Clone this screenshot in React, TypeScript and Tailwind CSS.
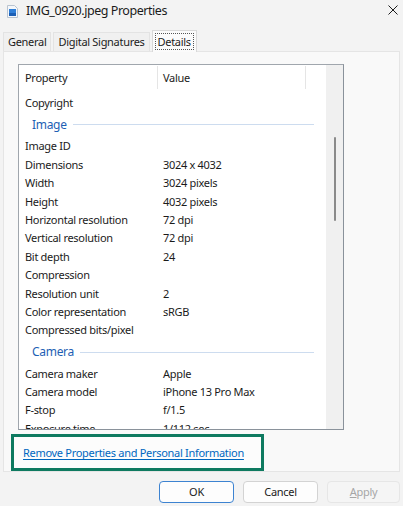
import React from 'react';

type Row =
  | { kind: 'row'; name: string; value?: string }
  | { kind: 'group'; name: string };

const rows: Row[] = [
  { kind: 'row', name: 'Copyright' },
  { kind: 'group', name: 'Image' },
  { kind: 'row', name: 'Image ID' },
  { kind: 'row', name: 'Dimensions', value: '3024 x 4032' },
  { kind: 'row', name: 'Width', value: '3024 pixels' },
  { kind: 'row', name: 'Height', value: '4032 pixels' },
  { kind: 'row', name: 'Horizontal resolution', value: '72 dpi' },
  { kind: 'row', name: 'Vertical resolution', value: '72 dpi' },
  { kind: 'row', name: 'Bit depth', value: '24' },
  { kind: 'row', name: 'Compression' },
  { kind: 'row', name: 'Resolution unit', value: '2' },
  { kind: 'row', name: 'Color representation', value: 'sRGB' },
  { kind: 'row', name: 'Compressed bits/pixel' },
  { kind: 'group', name: 'Camera' },
  { kind: 'row', name: 'Camera maker', value: 'Apple' },
  { kind: 'row', name: 'Camera model', value: 'iPhone 13 Pro Max' },
  { kind: 'row', name: 'F-stop', value: 'f/1.5' },
  { kind: 'row', name: 'Exposure time', value: '1/112 sec.' },
];

function FileIcon() {
  return (
    <svg width="11" height="13" viewBox="0 0 11 13">
      <path d="M0.5 0.5h7l3 3v9h-10z" fill="#f4f7fb" stroke="#b9c3cf" />
      <rect x="2" y="4" width="7" height="7" fill="#2f7fd8" />
      <rect x="2" y="8" width="7" height="3" fill="#1c5fb5" />
    </svg>
  );
}

function Tab({ label, active }: { label: string; active?: boolean }) {
  if (active) {
    return (
      <div className="relative z-10 -mb-px h-[22px] px-[2px] pt-[2px] bg-[#fbfbfb] border border-b-0 border-[#d9d9d9]">
        <div className="px-[2px] h-[17px] leading-[15px] border border-dotted border-[#555]">
          {label}
        </div>
      </div>
    );
  }
  return (
    <div className="h-[19px] mt-[2px] px-[4px] leading-[18px] bg-[#f0f0f0] border border-b-0 border-[#e3e3e3]">
      {label}
    </div>
  );
}

export default function App() {
  return (
    <div className="w-[403px] h-[506px] overflow-hidden bg-[#f3f3f3] text-[11px] tracking-[-0.3px] text-[#1b1b1b] font-['Noto_Sans',sans-serif]">
      {/* title bar */}
      <div className="h-[30px] flex items-start pt-[4px]">
        <div className="ml-[7px] mt-[1px]">
          <FileIcon />
        </div>
        <div className="ml-[8px] text-[12.5px] tracking-[-0.45px] leading-[14px]">IMG_0920.jpeg Properties</div>
        <div className="ml-auto mr-[5px] mt-[1px] w-[10px] h-[10px]">
          <svg width="10" height="10" viewBox="0 0 10 10">
            <path d="M0.5 0.5l9 9M9.5 0.5l-9 9" stroke="#1b1b1b" strokeWidth="1" />
          </svg>
        </div>
      </div>

      {/* tabs */}
      <div className="flex items-end pl-[3px] gap-[2px] h-[21px]">
        <Tab label="General" />
        <Tab label="Digital Signatures" />
        <Tab label="Details" active />
      </div>

      {/* tab page */}
      <div className="mx-[3px] h-[421px] bg-[#f9f9f9] border border-[#e5e5e5] pt-[12px] pl-[14px]">
        <div className="w-[326px] h-[366px] bg-white border border-[#a0a6ad] border-r-[#8a929b] border-b-[#8a929b] flex overflow-hidden">
          <div className="flex-1 overflow-hidden">
            <div className="h-[25px] flex relative">
              <div className="w-[138px] pl-[6px] leading-[25px]">Property</div>
              <div className="w-px h-[23px] bg-[#e5e5e5] mt-[1px]" />
              <div className="w-[147px] pl-[5px] leading-[25px]">Value</div>
              <div className="w-px h-[23px] bg-[#e5e5e5] mt-[1px]" />
            </div>
            <div className="pt-[4px]">
              {rows.map((r, i) =>
                r.kind === 'group' ? (
                  <div key={i} className="h-[25px] flex items-center pl-[13px] pr-[12px]">
                    <span className="text-[#1e5fb4] text-[12px]">{r.name}</span>
                    <div className="ml-[6px] h-px flex-1 bg-[#cddcef]" />
                  </div>
                ) : (
                  <div key={i} className="h-[18.4px] flex leading-[18.4px] whitespace-nowrap">
                    <div className="w-[144px] pl-[6px]">{r.name}</div>
                    <div>{r.value ?? ''}</div>
                  </div>
                )
              )}
            </div>
          </div>
          <div className="w-[17px] bg-[#f0f0f0] flex justify-center">
            <div className="mt-[72px] w-[2px] h-[84px] rounded-full bg-[#8a8a8a]" />
          </div>
        </div>

        <div className="mt-[4px] -ml-[7px] w-[253px] h-[37px] border-[3px] border-[#0e7a60] bg-[#fcfcfc] flex items-center pl-[9px] pt-[2px]">
          <span className="text-[#0067c0] underline underline-offset-[2px] whitespace-nowrap">
            Remove Properties and Personal Information
          </span>
        </div>
      </div>

      {/* buttons */}
      <div className="flex justify-end gap-[9px] pr-[3px] mt-[9px]">
        <button className="w-[75px] h-[22px] rounded-[4px] bg-[#fdfdfd] border-[1.5px] border-[#3d83d1] leading-[18px]">
          OK
        </button>
        <button className="w-[75px] h-[22px] rounded-[4px] bg-[#fdfdfd] border border-[#d3d3d3] leading-[20px]">
          Cancel
        </button>
        <button className="w-[73px] h-[22px] rounded-[4px] bg-[#f5f5f5] border border-[#e6e6e6] leading-[20px] text-[#a6a6a6]">
          <span className="underline">A</span>pply
        </button>
      </div>
    </div>
  );
}
